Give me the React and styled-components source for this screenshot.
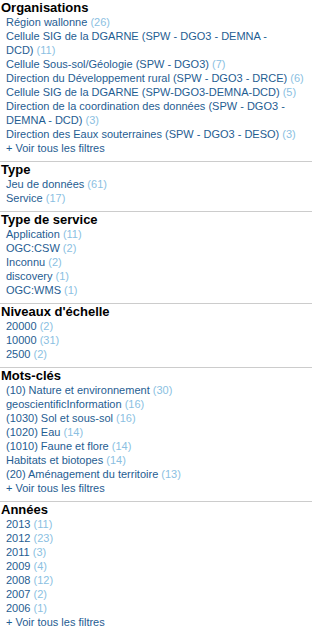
import React from 'react';
import styled, { createGlobalStyle } from 'styled-components';

const GlobalStyle = createGlobalStyle`
  body {
    margin: 0;
    background: #fff;
    font-family: "Liberation Sans", Arial, sans-serif;
  }
`;

const Panel = styled.div`
  width: 312px;
`;

const Section = styled.section`
  padding-bottom: 6px;

  & + & {
    border-top: 1px solid #cccccc;
  }
`;

const Heading = styled.h3`
  margin: 0;
  padding-left: 1px;
  font-size: 13px;
  line-height: 15px;
  font-weight: bold;
  color: #000;
`;

const List = styled.ul`
  list-style: none;
  margin: 0;
  padding: 0 4px 0 6px;
`;

const Item = styled.li`
  font-size: 11px;
  line-height: 14px;
  color: #1f5d92;
`;

const Label = styled.a`
  color: #1f5d92;
  text-decoration: none;
`;

const Count = styled.span`
  color: #8bbfe2;
`;

const facets = [
  {
    title: 'Organisations',
    more: true,
    items: [
      ['Région wallonne', 26],
      ['Cellule SIG de la DGARNE (SPW - DGO3 - DEMNA - DCD)', 11],
      ['Cellule Sous-sol/Géologie (SPW - DGO3)', 7],
      ['Direction du Développement rural (SPW - DGO3 - DRCE)', 6],
      ['Cellule SIG de la DGARNE (SPW-DGO3-DEMNA-DCD)', 5],
      ['Direction de la coordination des données (SPW - DGO3 - DEMNA - DCD)', 3],
      ['Direction des Eaux souterraines (SPW - DGO3 - DESO)', 3],
    ],
  },
  {
    title: 'Type',
    items: [
      ['Jeu de données', 61],
      ['Service', 17],
    ],
  },
  {
    title: 'Type de service',
    items: [
      ['Application', 11],
      ['OGC:CSW', 2],
      ['Inconnu', 2],
      ['discovery', 1],
      ['OGC:WMS', 1],
    ],
  },
  {
    title: "Niveaux d'échelle",
    items: [
      ['20000', 2],
      ['10000', 31],
      ['2500', 2],
    ],
  },
  {
    title: 'Mots-clés',
    more: true,
    items: [
      ['(10) Nature et environnement', 30],
      ['geoscientificInformation', 16],
      ['(1030) Sol et sous-sol', 16],
      ['(1020) Eau', 14],
      ['(1010) Faune et flore', 14],
      ['Habitats et biotopes', 14],
      ['(20) Aménagement du territoire', 13],
    ],
  },
  {
    title: 'Années',
    more: true,
    items: [
      ['2013', 11],
      ['2012', 23],
      ['2011', 3],
      ['2009', 4],
      ['2008', 12],
      ['2007', 2],
      ['2006', 1],
    ],
  },
];

const App = () => (
  <>
    <GlobalStyle />
    <Panel>
      {facets.map(facet => (
        <Section key={facet.title}>
          <Heading>{facet.title}</Heading>
          <List>
            {facet.items.map(([label, count]) => (
              <Item key={label}>
                <Label href="#">{label}</Label>{'\u00a0'}<Count>({count})</Count>
              </Item>
            ))}
            {facet.more && (
              <Item>
                <Label href="#">+ Voir tous les filtres</Label>
              </Item>
            )}
          </List>
        </Section>
      ))}
    </Panel>
  </>
);

export default App;
